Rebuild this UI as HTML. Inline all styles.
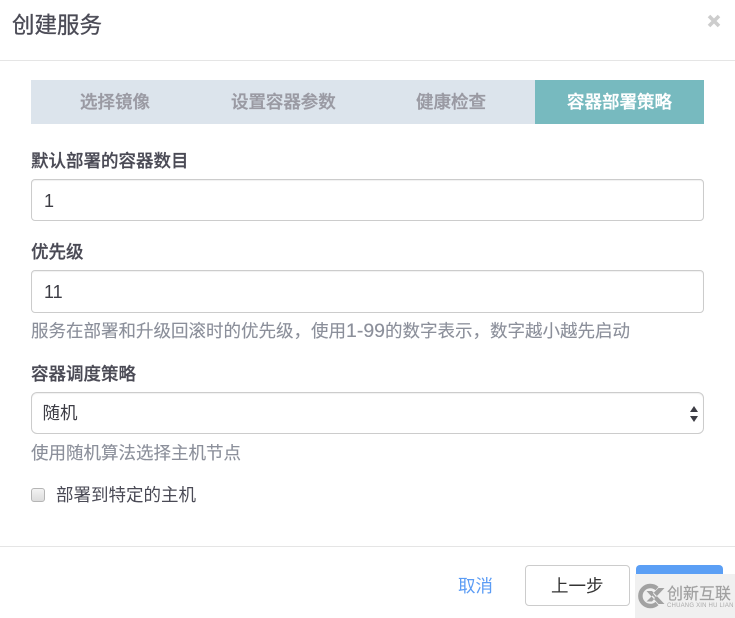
<!DOCTYPE html>
<html lang="zh"><head><meta charset="utf-8">
<style>
html,body{margin:0;padding:0;background:#fff}
body{width:735px;height:618px;position:relative;overflow:hidden;font-family:"Liberation Sans","Noto Sans CJK SC",sans-serif;color:#4a4a55}
.a{position:absolute;white-space:nowrap;font-size:17.5px;line-height:24px}
.b{font-weight:500;-webkit-text-stroke:.25px currentColor}
.box{position:absolute;left:31px;width:671px;border:1px solid #ccc;border-radius:4px;background:#fff;box-shadow:inset 0 1px 1px rgba(0,0,0,.06)}
.tab{color:#9a9aa3;font-weight:500;text-align:center;-webkit-text-stroke:.35px currentColor}
.hint{color:#8b8f9a;-webkit-text-stroke:.12px currentColor}
.val{color:#3c3c44;font-size:18px}
</style></head><body>
<div class="a" style="left:12px;top:11px;font-size:22.5px;line-height:30px;-webkit-text-stroke:.3px #4a4a55">创建服务</div>
<svg class="a" style="left:707px;top:14px" width="14" height="14" viewBox="0 0 14 14"><path d="M2 2L12 12M12 2L2 12" stroke="#cdcdcd" stroke-width="3.6" fill="none"/></svg>
<div style="position:absolute;left:0;top:60px;width:735px;height:1px;background:#e5e5e5"></div>

<div style="position:absolute;left:31px;top:80px;width:504px;height:44px;background:#dce4ec"></div>
<div style="position:absolute;left:535px;top:80px;width:169px;height:44px;background:#77babf"></div>
<div class="a tab" style="left:80px;top:90px">选择镜像</div>
<div class="a tab" style="left:231px;top:90px;letter-spacing:-.05px">设置容器参数</div>
<div class="a tab" style="left:416px;top:90px">健康检查</div>
<div class="a tab" style="left:567px;top:90px;color:#fff">容器部署策略</div>

<div class="a b" style="left:31px;top:149px">默认部署的容器数目</div>
<div class="box" style="top:179px;height:40px"></div>
<div class="a val" style="left:44px;top:188.500px">1</div>

<div class="a b" style="left:31px;top:240px">优先级</div>
<div class="box" style="top:270px;height:41px"></div>
<div class="a val" style="left:44px;top:280px">11</div>
<div class="a hint" style="left:31px;top:319px">服务在部署和升级回滚时的优先级，使用<span style="font-size:19.5px;line-height:0">1-99</span>的数字表示，数字越小越先启动</div>

<div class="a b" style="left:31px;top:362px">容器调度策略</div>
<div class="box" style="top:392px;height:40px;border-radius:6px"></div>
<div class="a val" style="left:42.500px;top:401px;font-size:17.5px">随机</div>
<svg class="a" style="left:689px;top:405px" width="10" height="18" viewBox="0 0 10 18"><path d="M5 1L9 7H1Z M5 17L1 11H9Z" fill="#3c3c44"/></svg>
<div class="a hint" style="left:31px;top:440.500px">使用随机算法选择主机节点</div>

<div style="position:absolute;left:31px;top:488px;width:12px;height:12px;border:1px solid #b5b5b5;border-radius:3px;background:linear-gradient(#f3f3f3,#dcdcdc)"></div>
<div class="a" style="left:56px;top:483px">部署到特定的主机</div>

<div style="position:absolute;left:0;top:546px;width:735px;height:1px;background:#e5e5e5"></div>
<div class="a" style="left:458px;top:574px;color:#5b9cf5">取消</div>
<div style="position:absolute;left:525px;top:565px;width:103px;height:39px;border:1px solid #ccc;border-radius:4px;background:#fff"></div>
<div class="a" style="left:551px;top:574px;color:#333">上一步</div>
<div style="position:absolute;left:636px;top:565px;width:87px;height:41px;background:#5b9ff5;border-radius:4px"></div>

<div style="position:absolute;left:635px;top:574px;width:100px;height:44px;background:#f0f0f0"></div>
<svg class="a" style="left:638px;top:583px" width="28" height="26" viewBox="0 0 28 26"><path d="M19 5.500A10 10 0 1 0 19 20.500" fill="none" stroke="#a2a2a2" stroke-width="4.500"/><path d="M8.500 8H14L26.500 21H20.500ZM26.500 5H20.500L15 10.500L18 14ZM8.500 18.500H14L17 15L14.500 12.500Z" fill="#a2a2a2"/></svg>
<div class="a" style="left:667px;top:584.500px;font-size:16px;line-height:20px;color:#a0a0a0;-webkit-text-stroke:.15px #a0a0a0">创新互联</div>
<div class="a" style="left:667px;top:603px;font-size:6px;line-height:7px;color:#aaa;letter-spacing:.2px">CHUANG XIN HU LIAN</div>
</body></html>
